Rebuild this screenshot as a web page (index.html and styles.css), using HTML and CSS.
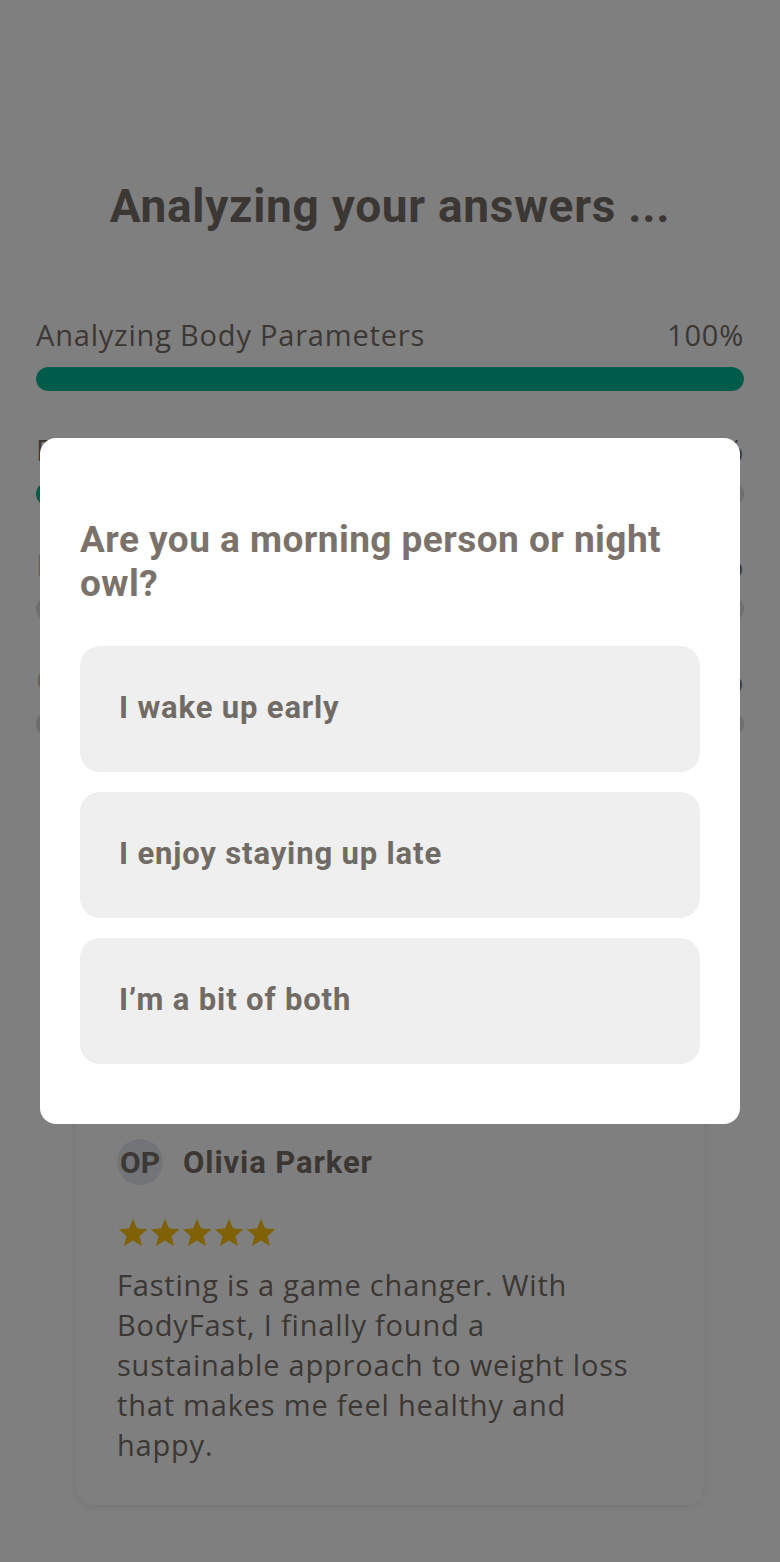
FILE: index.html
```html
<!DOCTYPE html>
<html lang="en">
<head>
<meta charset="utf-8">
<title>Analyzing your answers</title>
<link rel="stylesheet" href="styles.css">
</head>
<body>
<main class="page">
  <h1 class="title">Analyzing your answers ...</h1>
  <section class="progress-list">
    <div class="progress">
      <div class="progress-head"><span>Analyzing Body Parameters</span><span>100%</span></div>
      <div class="track"><div class="fill" style="width:100%"></div></div>
    </div>
    <div class="progress">
      <div class="progress-head"><span>Evaluating Eating Habits</span><span>42%</span></div>
      <div class="track"><div class="fill" style="width:42%"></div></div>
    </div>
    <div class="progress pending">
      <div class="progress-head"><span>Identifying Lifestyle Factors</span><span>0%</span></div>
      <div class="track"><div class="fill" style="width:0%"></div></div>
    </div>
    <div class="progress pending">
      <div class="progress-head"><span>Creating Your Fasting Plan</span><span>0%</span></div>
      <div class="track"><div class="fill" style="width:0%"></div></div>
    </div>
  </section>
  <h2 class="subtitle">Over 5 million users trust BodyFast</h2>
  <article class="review">
    <div class="review-head">
      <span class="avatar">OP</span>
      <span class="name">Olivia Parker</span>
    </div>
    <div class="stars">
      <svg viewBox="0 0 24 24"><path d="M12 1.5l3.1 7.1 7.6.6-5.8 5 1.8 7.5L12 17.7l-6.7 4 1.8-7.5-5.8-5 7.6-.6z"/></svg>
      <svg viewBox="0 0 24 24"><path d="M12 1.5l3.1 7.1 7.6.6-5.8 5 1.8 7.5L12 17.7l-6.7 4 1.8-7.5-5.8-5 7.6-.6z"/></svg>
      <svg viewBox="0 0 24 24"><path d="M12 1.5l3.1 7.1 7.6.6-5.8 5 1.8 7.5L12 17.7l-6.7 4 1.8-7.5-5.8-5 7.6-.6z"/></svg>
      <svg viewBox="0 0 24 24"><path d="M12 1.5l3.1 7.1 7.6.6-5.8 5 1.8 7.5L12 17.7l-6.7 4 1.8-7.5-5.8-5 7.6-.6z"/></svg>
      <svg viewBox="0 0 24 24"><path d="M12 1.5l3.1 7.1 7.6.6-5.8 5 1.8 7.5L12 17.7l-6.7 4 1.8-7.5-5.8-5 7.6-.6z"/></svg>
    </div>
    <p class="review-text">Fasting is a game changer. With BodyFast, I finally found a sustainable approach to weight loss that makes me feel healthy and happy.</p>
  </article>
</main>

<div class="overlay">
  <div class="modal" role="dialog">
    <h2 class="question">Are you a morning person or night owl?</h2>
    <div class="options">
      <button class="option">I wake up early</button>
      <button class="option">I enjoy staying up late</button>
      <button class="option">I’m a bit of both</button>
    </div>
  </div>
</div>
</body>
</html>
```

FILE: styles.css
```css
* { box-sizing: border-box; }

html, body {
  margin: 0;
  padding: 0;
  background: #ffffff;
}

body {
  font-family: "Open Sans", "Noto Sans", sans-serif;
  color: #776f68;
}

.page {
  padding: 180px 36px 60px;
}

.title {
  margin: 0;
  font-family: Roboto, "Noto Sans", sans-serif;
  font-size: 46px;
  line-height: 52px;
  font-weight: 700;
  text-align: center;
  letter-spacing: 0.7px;
}

.progress-list {
  margin-top: 85px;
  display: flex;
  flex-direction: column;
  gap: 41px;
}

.progress-head {
  display: flex;
  justify-content: space-between;
  font-size: 29px;
  line-height: 36px;
  letter-spacing: 0.8px;
  margin-bottom: 14px;
}

.pending .progress-head span:first-child {
  color: #c9c5c1;
}

.track {
  height: 24px;
  border-radius: 12px;
  background: #dcdcdc;
  overflow: hidden;
}

.fill {
  height: 100%;
  border-radius: 12px;
  background: #00b894;
}

.subtitle {
  margin: 120px 0 0;
  font-size: 32px;
  line-height: 40px;
  text-align: center;
}

.review {
  margin: 203px 40px 0;
  padding: 40px 60px 40px 41px;
  background: #ffffff;
  border-radius: 18px;
  box-shadow: 0 2px 10px rgba(0, 0, 0, 0.08);
}

.review-head {
  display: flex;
  align-items: center;
  gap: 20px;
}

.avatar {
  width: 46px;
  height: 46px;
  border-radius: 50%;
  background: #e4e9f0;
  display: flex;
  align-items: center;
  justify-content: center;
  font-family: Roboto, "Noto Sans", sans-serif;
  font-size: 30px;
  font-weight: 700;
  color: #77706a;
}

.name {
  font-family: Roboto, "Noto Sans", sans-serif;
  font-size: 31px;
  font-weight: 700;
  letter-spacing: 0.9px;
}

.stars {
  display: flex;
  gap: 0;
  margin-top: 32px;
  height: 32px;
}

.stars svg {
  width: 32px;
  height: 32px;
  fill: #ffc40d;
}

.review-text {
  margin: 16px 0 0;
  font-size: 29px;
  line-height: 40px;
  letter-spacing: 0.8px;
}

.overlay {
  position: fixed;
  inset: 0;
  background: rgba(0, 0, 0, 0.5);
  display: flex;
  align-items: center;
  justify-content: center;
}

.modal {
  width: 700px;
  background: #ffffff;
  border-radius: 16px;
  padding: 80px 40px 60px;
}

.question {
  margin: 0;
  font-family: Roboto, "Noto Sans", sans-serif;
  font-size: 37px;
  line-height: 44px;
  font-weight: 700;
  color: #7a726b;
  letter-spacing: 0.45px;
}

.options {
  margin-top: 40px;
  display: flex;
  flex-direction: column;
  gap: 20px;
}

.option {
  height: 126px;
  border: none;
  border-radius: 20px;
  background: #efefef;
  padding: 0 39px 4px;
  text-align: left;
  font-family: Roboto, "Noto Sans", sans-serif;
  font-size: 31px;
  font-weight: 700;
  color: #716b65;
  letter-spacing: 0.85px;
}
```
